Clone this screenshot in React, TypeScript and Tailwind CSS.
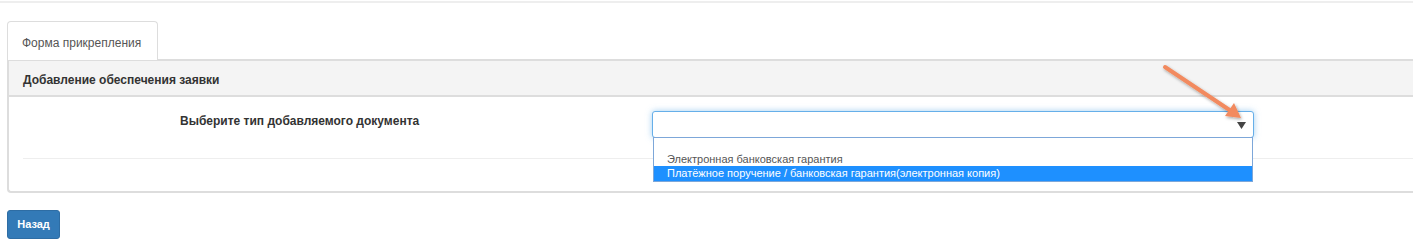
export default function App() {
  const font = { fontFamily: '"Liberation Sans", Arial, sans-serif' };
  return (
    <div className="relative w-[1413px] h-[241px] overflow-hidden bg-white text-[12px] text-[#333]" style={font}>
      {/* top rule */}
      <div className="h-[3px] border-b-2 border-[#eeeeee]" />

      <div className="pl-[7px] pt-[18px]">
        {/* tabs */}
        <div className="flex">
          <div className="relative z-10 -mb-px w-[151px] h-[39px] border border-b-0 border-[#dddddd] rounded-t-[4px] bg-white pl-[14px] pt-[12px] text-[#555]">
            Форма прикрепления
          </div>
        </div>

        {/* panel */}
        <div className="w-[1420px] border-2 border-[#dddddd] border-r-0 rounded-bl-[4px]">
          <div className="h-[36px] bg-[#f4f4f4] border-b-2 border-[#dddddd] pl-[14px] pt-[10px] font-bold text-[#333]">
            Добавление обеспечения заявки
          </div>
          <div className="px-[14px] pt-[14px] pb-[32px]">
            <div className="flex items-start h-[47px]">
              <div className="w-[629px] pl-[157px] pt-[1px] font-bold text-[#333]">
                Выберите тип добавляемого документа
              </div>
              <div className="relative">
                <div className="w-[602px] h-[27px] border border-[#66afe9] rounded-[3px] bg-white shadow-[0_0_6px_rgba(102,175,233,0.6)] flex items-center justify-end pr-[7px]">
                  <svg width="9" height="8" viewBox="0 0 9 8">
                    <path d="M0 1 L9 1 L4.5 8 Z" fill="#444" />
                  </svg>
                </div>
                {/* open options list */}
                <div className="absolute z-20 left-[1px] top-[26px] w-[600px] h-[45px] border border-[#7da7d9] bg-white flex flex-col justify-end text-[11px]">
                  <div className="pl-[13px] h-[14px] leading-[14px] text-[#555]">Электронная банковская гарантия</div>
                  <div className="pl-[13px] h-[15px] leading-[15px] bg-[#1e90ff] text-white">
                    Платёжное поручение / банковская гарантия(электронная копия)
                  </div>
                </div>
              </div>
            </div>
            <div className="border-t border-[#eeeeee]" />
          </div>
        </div>

        <div className="pt-[17px]">
          <button className="h-[29px] w-[53px] rounded-[3px] bg-[#337ab7] border border-[#2e6da4] text-white font-bold text-[11px]" style={font}>
            Назад
          </button>
        </div>
      </div>

      {/* annotation arrow */}
      <svg className="absolute left-[1155px] top-[58px] pointer-events-none" width="100" height="72" viewBox="0 0 100 72">
        <defs>
          <filter id="sh" x="-20%" y="-20%" width="140%" height="140%">
            <feDropShadow dx="1" dy="1.5" stdDeviation="1.5" floodColor="#000" floodOpacity="0.35" />
          </filter>
        </defs>
        <g filter="url(#sh)">
          <line x1="10" y1="9" x2="76" y2="53" stroke="#f28a5e" strokeWidth="4" strokeLinecap="round" />
          <path d="M86 60 L70 58 L79 45 Z" fill="#f28a5e" />
        </g>
      </svg>
    </div>
  );
}
